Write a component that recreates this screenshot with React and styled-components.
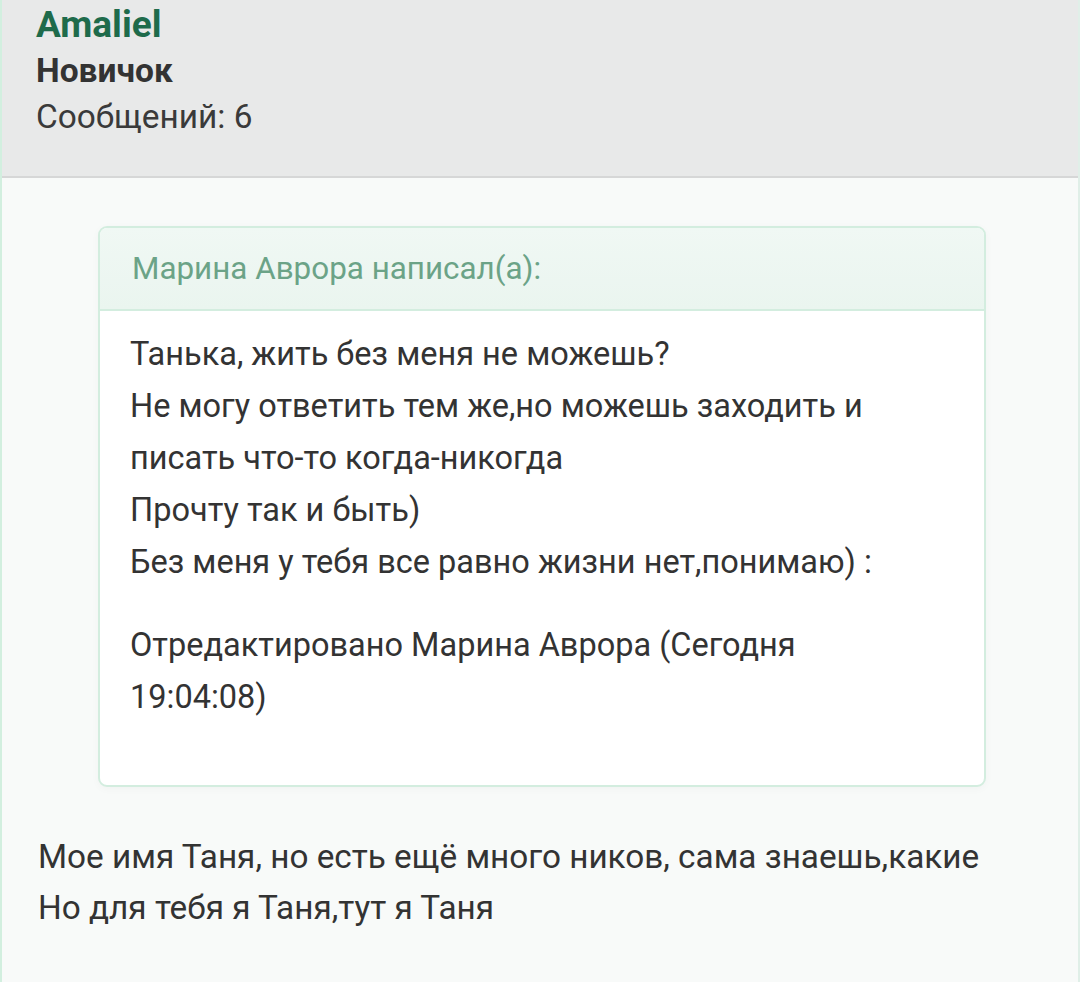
import React from 'react';
import styled, { createGlobalStyle } from 'styled-components';

const GlobalStyle = createGlobalStyle`
    html, body {
        margin: 0;
        padding: 0;
        background: #f8faf9;
    }
    body {
        font-family: Roboto, "Noto Sans", "Liberation Sans", sans-serif;
        color: #333;
    }
`

const Post = styled.div`
    width: 1080px;
    height: 982px;
    box-sizing: border-box;
    border-left: 2px solid #d2efdf;
    border-right: 2px solid #e0efe8;
    background: #f8faf9;
    overflow: hidden;
`

const Author = styled.div`
    background: #e8e9e9;
    border-bottom: 2px solid #d6d7d7;
    height: 178px;
    box-sizing: border-box;
    padding: 2px 0 0 34px;
    display: flex;
    flex-direction: column;
    .name{
        color: #1e6b4b;
        font-weight: 700;
        font-size: 37px;
        line-height: 46px;
    }
    .rank{
        color: #333;
        font-weight: 700;
        font-size: 33.5px;
        line-height: 46px;
    }
    .count{
        color: #3a3a3a;
        font-size: 33.4px;
        line-height: 46px;
    }
`

const Content = styled.div`
    padding: 48px 0 0 36px;
`

const Quote = styled.blockquote`
    margin: 0 0 0 60px;
    width: 888px;
    box-sizing: border-box;
    border: 2px solid #d3eddf;
    border-radius: 9px;
    background: #fff;
    overflow: hidden;
    box-shadow: 0 2px 8px rgba(0, 0, 0, 0.03);
`

const QuoteHead = styled.div`
    height: 83px;
    box-sizing: border-box;
    border-bottom: 2px solid #d3eddf;
    background: linear-gradient(#f0f8f4, #eaf5ef);
    padding-left: 32px;
    display: flex;
    align-items: center;
    color: #6ba387;
    font-size: 31.4px;
`

const QuoteBody = styled.div`
    padding: 17px 48px 62px 30px;
    font-size: 32.5px;
    line-height: 52px;
    color: #333;
    p{
        margin: 0;
    }
    p + p{
        margin-top: 31px;
    }
`

const Message = styled.div`
    margin-top: 44px;
    font-size: 33.3px;
    line-height: 51px;
    color: #333;
`

export default function App() {
    return (
        <>
            <GlobalStyle />
            <Post>
                <Author>
                    <span className='name'>Amaliel</span>
                    <span className='rank'>Новичок</span>
                    <span className='count'>Сообщений: 6</span>
                </Author>
                <Content>
                    <Quote>
                        <QuoteHead>Марина Аврора написал(а):</QuoteHead>
                        <QuoteBody>
                            <p>
                                Танька, жить без меня не можешь?<br />
                                Не могу ответить тем же,но можешь заходить и писать что-то когда-никогда<br />
                                Прочту так и быть)<br />
                                Без меня у тебя все равно жизни нет,понимаю) :
                            </p>
                            <p>Отредактировано Марина Аврора (Сегодня 19:04:08)</p>
                        </QuoteBody>
                    </Quote>
                    <Message>
                        Мое имя Таня, но есть ещё много ников, сама знаешь,какие<br />
                        Но для тебя я Таня,тут я Таня
                    </Message>
                </Content>
            </Post>
        </>
    )
}
